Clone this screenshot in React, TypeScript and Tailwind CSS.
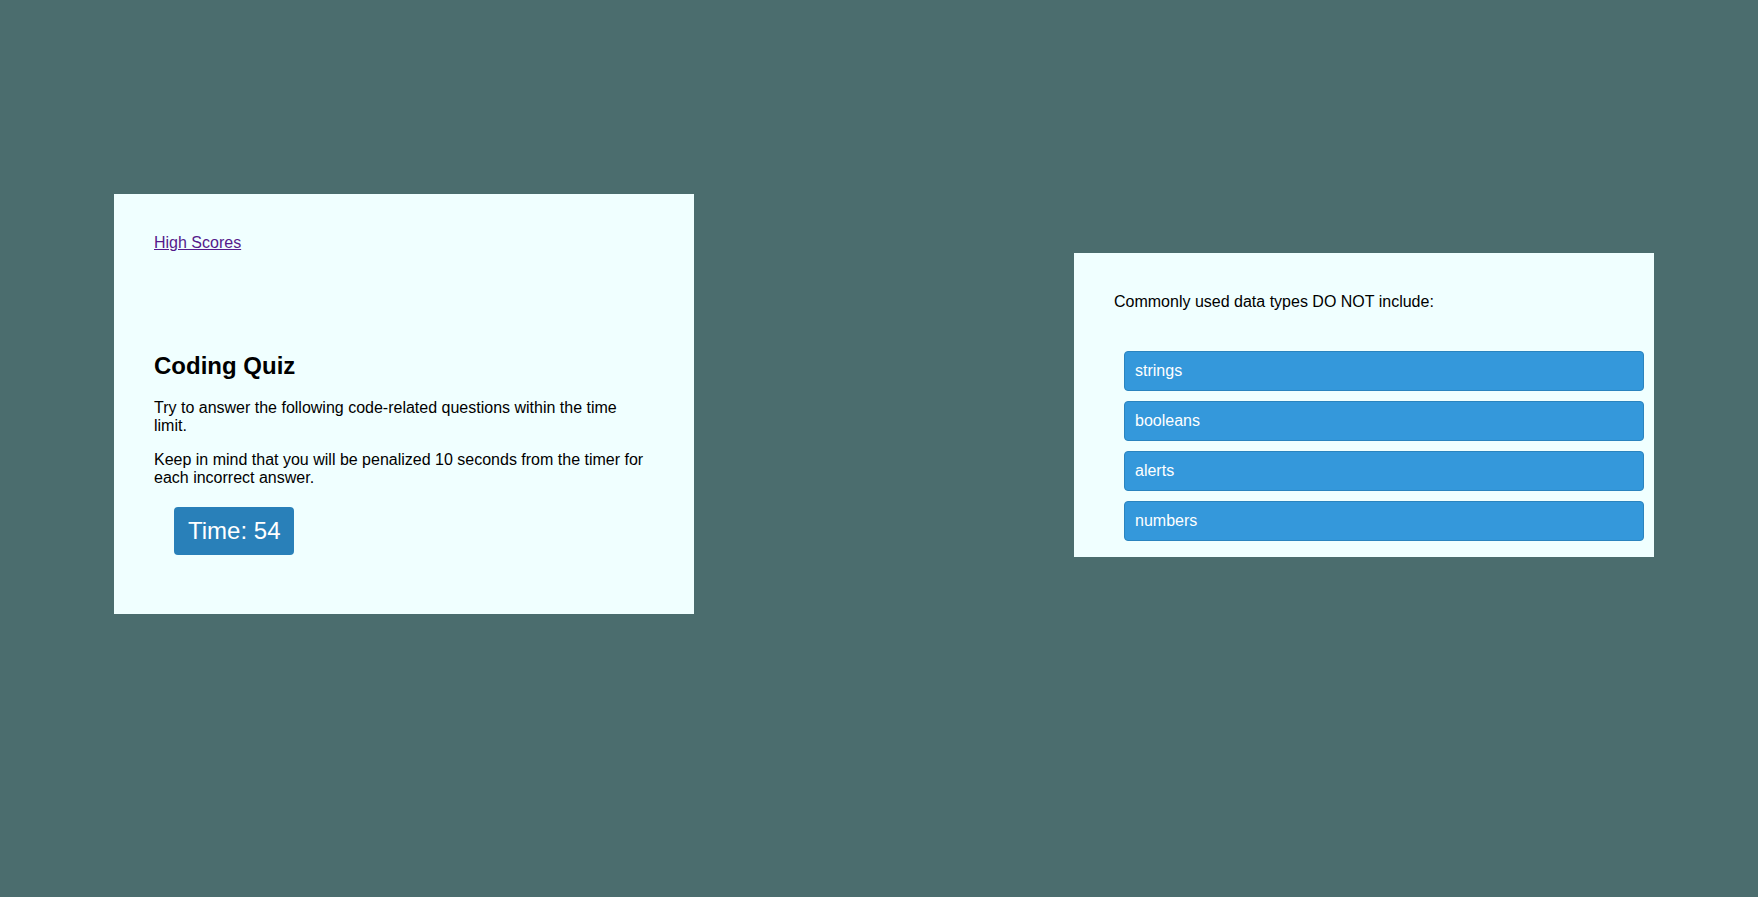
const CHOICES = ['strings', 'booleans', 'alerts', 'numbers'];

export default function App() {
  return (
    <div
      className="flex h-[897px] w-full items-start gap-[380px] bg-[#4b6d6e] pl-[114px] text-black"
      style={{ fontFamily: '"Liberation Sans", Arial, sans-serif' }}
    >
      <div className="mt-[194px] h-[420px] w-[580px] shrink-0 bg-[#f0ffff] px-10 pt-10">
        <a href="#" className="block w-fit text-base leading-[18px] text-[#551a8b] underline">
          High Scores
        </a>
        <h2 className="mt-[100px] text-2xl font-bold leading-[28px]">Coding Quiz</h2>
        <p className="mt-[19px] text-base leading-[18px]">
          Try to answer the following code-related questions within the time limit.
        </p>
        <p className="mt-4 text-base leading-[18px]">
          Keep in mind that you will be penalized 10 seconds from the timer for each incorrect answer.
        </p>
        <div className="ml-5 mt-5 flex h-12 w-fit items-center rounded-[4px] bg-[#2980b9] px-[14px] text-2xl leading-[28px] text-white">
          Time: 54
        </div>
      </div>

      <div className="mt-[253px] w-[580px] shrink-0 bg-[#f0ffff] pb-4 pl-10 pt-10">
        <p className="text-base leading-[18px]">Commonly used data types DO NOT include:</p>
        <div className="ml-[10px] mt-10 flex w-[520px] flex-col gap-[10px]">
          {CHOICES.map((c) => (
            <button
              key={c}
              className="flex h-10 items-center rounded-[4px] border border-[#2a84bf] bg-[#3498db] px-[10px] text-left text-base text-white"
            >
              {c}
            </button>
          ))}
        </div>
      </div>
    </div>
  );
}
